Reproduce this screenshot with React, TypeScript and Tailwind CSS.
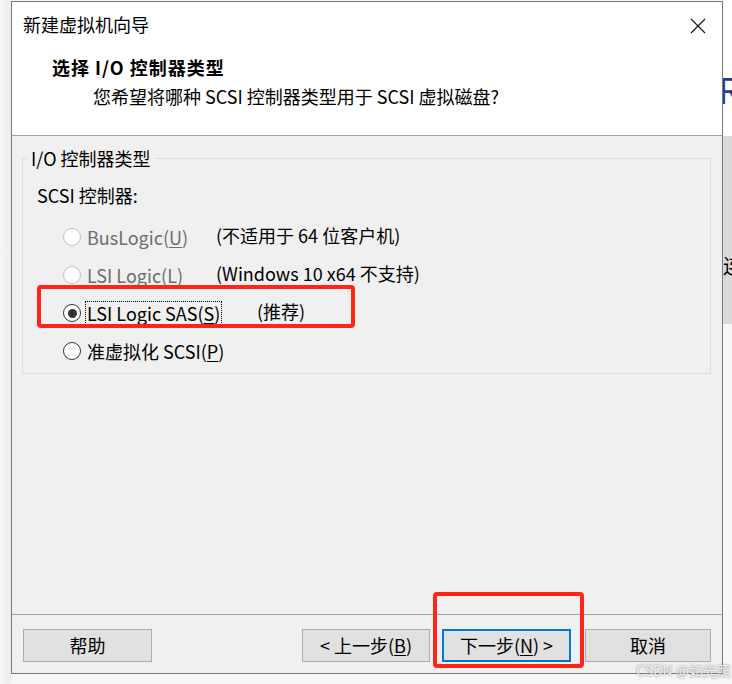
import React from "react";

const font = "font-['Noto_Sans_CJK_SC','Noto_Sans',sans-serif]";

interface IOption {
  pre: string;
  accel: string;
  desc?: string;
  descGap: string;
  disabled?: boolean;
  checked?: boolean;
}

const options: IOption[] = [
  { pre: "BusLogic(", accel: "U", desc: "(不适用于 64 位客户机)", descGap: "w-[130px]", disabled: true },
  { pre: "LSI Logic(", accel: "L", desc: "(Windows 10 x64 不支持)", descGap: "w-[130px]", disabled: true },
  { pre: "LSI Logic SAS(", accel: "S", desc: "(推荐)", descGap: "w-[171px]", checked: true },
  { pre: "准虚拟化 SCSI(", accel: "P", descGap: "w-[160px]" },
];

const Radio = ({ disabled, checked }: { disabled?: boolean; checked?: boolean }) => (
  <span
    className={`flex h-[18px] w-[18px] shrink-0 items-center justify-center rounded-full border bg-white ${
      disabled ? "border-[#c4c4c4]" : "border-[#333333]"
    }`}
  >
    {checked && <span className="h-[9px] w-[9px] rounded-full bg-[#333333]" />}
  </span>
);

const Button = ({ children, width, primary }: { children: React.ReactNode; width: string; primary?: boolean }) => (
  <button
    className={`${width} flex h-[33px] items-center justify-center whitespace-nowrap bg-[#e1e1e1] text-[18px] text-black ${
      primary ? "border-2 border-[#0078d7]" : "border border-[#adadad]"
    }`}
  >
    {children}
  </button>
);

export default function App() {
  return (
    <div className={`relative flex h-[684px] w-[732px] overflow-hidden bg-[#f6f6f6] ${font}`}>
      {/* left shadow strip */}
      <div className="w-[11px] bg-gradient-to-r from-[#f7f7f7] to-[#ececec]" />

      {/* dialog window */}
      <div className="mt-[1px] flex h-[673px] w-[712px] flex-col border border-[#7a7a7a] bg-[#f0f0f0]">
        <div className="h-[134px] border-b border-[#a0a0a0] bg-white">
          <div className="flex h-[44px] items-center justify-between pl-[11px] pr-[16px]">
            <span className="text-[18px] leading-[24px] text-black">新建虚拟机向导</span>
            <svg width="16" height="16" viewBox="0 0 16 16" className="mt-[3px]">
              <path d="M1 1 L15 15 M15 1 L1 15" stroke="#111" strokeWidth="1.1" fill="none" />
            </svg>
          </div>
          <div className="mt-[9px] pl-[40px] text-[18px] font-bold leading-[24px] tracking-[1px] text-black">
            选择 I/O 控制器类型
          </div>
          <div className="mt-[5px] pl-[81px] text-[18px] leading-[24px] text-black">
            您希望将哪种 SCSI 控制器类型用于 SCSI 虚拟磁盘?
          </div>
        </div>

        <div className="h-[479px] border-b border-[#a0a0a0]">
          <fieldset className="mt-[10px] ml-[10px] mr-[11px] border border-[#dcdcdc] pl-[4px] pb-[3px]">
            <legend className="px-[4px] text-[18px] leading-[24px] text-black">I/O 控制器类型</legend>
            <div className="pl-[10px]">
              <div className="mt-[13px] text-[18px] leading-[24px] text-black">SCSI 控制器:</div>
              <div className="mt-[11px] flex flex-col">
                {options.map((o) => (
                  <div key={o.pre} className="flex h-[38px] items-center whitespace-nowrap pl-[26px] text-[18px]">
                    <Radio disabled={o.disabled} checked={o.checked} />
                    <div className={`${o.descGap} ml-[5px] flex`}>
                      <span
                        className={`px-[1px] leading-[22px] ${o.disabled ? "text-[#6d6d6d]" : "text-black"} ${
                          o.checked ? "outline outline-1 outline-dotted outline-black" : ""
                        }`}
                      >
                        {o.pre}
                        <span className="underline underline-offset-2">{o.accel}</span>)
                      </span>
                    </div>
                    {o.desc && <span className="-mt-[4px] leading-[22px] text-black">{o.desc}</span>}
                  </div>
                ))}
              </div>
            </div>
          </fieldset>
        </div>

        <div className="flex flex-1 items-start px-[11px] pt-[14px]">
          <Button width="w-[129px]">帮助</Button>
          <div className="ml-auto flex">
            <Button width="w-[128px]">
              &lt; 上一步(<span className="underline underline-offset-2">B</span>)
            </Button>
            <div className="ml-[12px]">
              <Button width="w-[129px]" primary>
                下一步(<span className="underline underline-offset-2">N</span>) &gt;
              </Button>
            </div>
            <div className="ml-[14px]">
              <Button width="w-[126px]">取消</Button>
            </div>
          </div>
        </div>
      </div>

      {/* right background strip */}
      <div className="flex w-[9px] flex-col overflow-hidden">
        <div className="relative h-[136px] bg-white">
          <span className="absolute left-[-5px] top-[68px] text-[36px] leading-[40px] text-[#2b3990]">R</span>
        </div>
        <div className="relative h-[188px] bg-[#dadada]">
          <span className="absolute left-[0px] top-[118px] text-[20px] leading-[24px] text-black">连</span>
        </div>
        <div className="flex-1 bg-[#f7f7f7]" />
      </div>

      {/* annotations */}
      <div className="absolute left-[37px] top-[285px] h-[43px] w-[318px] rounded-[4px] border-[4px] border-[#ff2617]" />
      <div className="absolute left-[433px] top-[592px] h-[76px] w-[151px] rounded-[4px] border-[4px] border-[#ff2617]" />
      <div className="absolute left-[636px] top-[661px] text-[14px] leading-[18px] text-[#f2f2f2] [text-shadow:0_0_2px_#6a6a6a]">
        CSDN @如光照
      </div>
    </div>
  );
}
